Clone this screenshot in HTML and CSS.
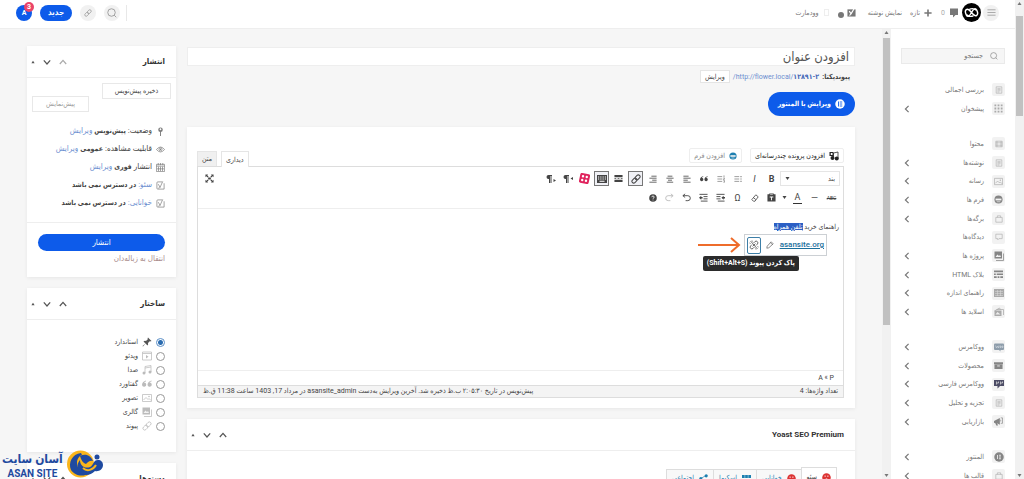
FILE: index.html
```html
<!DOCTYPE html>
<html lang="fa" dir="rtl">
<head>
<meta charset="utf-8">
<title>افزودن نوشته</title>
<link rel="stylesheet" href="styles.css">
</head>
<body>
<svg class="sprite" aria-hidden="true">
  <symbol id="chev-left" viewBox="0 0 10 10"><path d="M7 1 3 5l4 4" class="line"/></symbol>
  <symbol id="chev-up" viewBox="0 0 10 10"><path d="M1 7.500 5 3l4 4.500" class="line"/></symbol>
  <symbol id="chev-down" viewBox="0 0 10 10"><path d="M1 3l4 4.500L9 3" class="line"/></symbol>
  <symbol id="tri-up" viewBox="0 0 10 10"><path d="M5 2l4 6H1z"/></symbol>
  <symbol id="tri-down" viewBox="0 0 10 10"><path d="M1 2h8L5 8z"/></symbol>
  <symbol id="search" viewBox="0 0 20 20"><circle cx="9" cy="9" r="7.500" class="line"/><path d="M14.500 14.500 18.500 18.500" class="line"/></symbol>
  <symbol id="link" viewBox="0 0 20 20"><g transform="rotate(-45 10 10)" class="line"><rect x="0" y="6.500" width="11" height="7" rx="3.500"/><rect x="9" y="6.500" width="11" height="7" rx="3.500"/></g></symbol>
  <symbol id="unlink" viewBox="0 0 20 20"><g transform="rotate(-45 10 10)" class="line"><path d="M8 6.500H4a3.500 3.500 0 0 0 0 7h4M12 6.500h4a3.500 3.500 0 0 1 0 7h-4M6 10h8"/></g><path d="M3 2l14 16M3 7 1 6M7 3 6 1M17 13l2 1M13 17l1 2" class="line"/></symbol>
  <symbol id="menu" viewBox="0 0 20 20"><path d="M1 4h18M1 10h18M1 16h18" class="line"/></symbol>
  <symbol id="comment" viewBox="0 0 20 20"><path d="M2 1h16v13h-5l-5 5v-5H2z"/></symbol>
  <symbol id="bubble" viewBox="0 0 20 20"><path d="M2 3h16v11h-8l-3 3v-3H2z" class="line"/></symbol>
  <symbol id="plus" viewBox="0 0 20 20"><path d="M8 1h4v7h7v4h-7v7H8v-7H1V8h7z"/></symbol>
  <symbol id="yoast" viewBox="0 0 20 20"><path d="M14 2H4Q2 2 2 4v12q0 2 2 2h14V5M5 7l4 7M15 1 9 14q-1 2-4 2" class="line"/></symbol>
  <symbol id="yoast-fill" viewBox="0 0 20 20"><path d="M1 3h18v16H1z"/><path d="M5 7l4 6M16 1 9 13q-1 3-4 3" fill="none" stroke="#fff" stroke-width="2.500"/></symbol>
  <symbol id="page" viewBox="0 0 20 20"><path d="M3 2h14v16H3zM6 6h8M6 9h8M6 12h8M6 15h5" class="line"/></symbol>
  <symbol id="dots" viewBox="0 0 20 20"><path d="M1 1h4v4H1zM8 1h4v4H8zM15 1h4v4h-4zM1 8h4v4H1zM8 8h4v4H8zM15 8h4v4h-4zM1 15h4v4H1zM8 15h4v4H8zM15 15h4v4h-4z"/></symbol>
  <symbol id="grid" viewBox="0 0 20 20"><path d="M0 2h6v7H0zM7 2h6v7H7zM14 2h6v7h-6zM0 11h6v7H0zM7 11h6v7H7zM14 11h6v7h-6z"/></symbol>
  <symbol id="stack" viewBox="0 0 20 20"><path d="M2 3h16v14H2zM2 7h16M2 13h16M5 3v14M15 3v14" class="line"/></symbol>
  <symbol id="image" viewBox="0 0 20 20"><path d="M1 3h18v14H1zM3 14l5-5 4 4 2-2 4 4" class="line"/><circle cx="14" cy="7" r="1.500"/></symbol>
  <symbol id="robot" viewBox="0 0 20 20"><circle cx="10" cy="10" r="9"/><rect x="3.500" y="8" width="13" height="4" fill="#f2f2f2"/><path d="M6 15h8" stroke="#f2f2f2" stroke-width="1.500"/></symbol>
  <symbol id="bag" viewBox="0 0 20 20"><path d="M2 6h16v12H2zM6 6V2h8v4" class="line"/></symbol>
  <symbol id="gallery" viewBox="0 0 20 20"><path d="M1 1h15v14H1z"/><path d="M4 19h15V5" class="line"/><path d="M3 12l4-5 3 3 2-2 2 4z" fill="#f2f2f2"/></symbol>
  <symbol id="blocks" viewBox="0 0 20 20"><path d="M0 1h20v4H0zM0 8h4v3H0zM6 8h14v3H6zM0 14h6v4H0zM8 14h4v4H8zM14 14h6v4h-6z"/></symbol>
  <symbol id="table" viewBox="0 0 20 20"><path d="M0 2h20v16H0z"/><path d="M2 7h16M2 11h16M2 15h16M7 4v12M13 4v12" stroke="#ddd" fill="none"/></symbol>
  <symbol id="slides" viewBox="0 0 20 20"><path d="M1 8 11 2l2 3M5 5h14v11" class="line"/><path d="M1 7h14v11H1z"/><path d="M3 15l4-5 6 5z" fill="#eee"/></symbol>
  <symbol id="woo" viewBox="0 0 20 20"><rect x="0" y="3" width="20" height="13" rx="2"/><path d="M3 7l2 5 2-4 2 4 1-5M12 8h2v3h-2zM16 8h2v3h-2z" stroke="#dfe5ea" fill="none"/><path d="M9 15l4 4v-4z"/></symbol>
  <symbol id="archive" viewBox="0 0 20 20"><path d="M0 3h20v4H0zM1 8h18v10H1z"/><path d="M7 10h6v2H7z" fill="#eee"/></symbol>
  <symbol id="woofa" viewBox="0 0 20 20"><path d="M0 2h20v12h-8l-5 5v-5H0z"/><path d="M5 5v6M9 5v3h-3M13 5v6M17 5v3h-3" stroke="#ddd" stroke-width="1.500" fill="none"/></symbol>
  <symbol id="horn" viewBox="0 0 20 20"><path d="M0 9 13 2v15L7 14l2 5H5l-2-5-3-1z"/><path d="M15 2h4v12h-4M15 6v4" class="line"/></symbol>
  <symbol id="elementor" viewBox="0 0 20 20"><circle cx="10" cy="10" r="9.500"/><path d="M7 6v8M10 6.500h4M10 10h4M10 13.500h4" stroke="#fff" stroke-width="1.500"/></symbol>
  <symbol id="elementor-light" viewBox="0 0 20 20"><circle cx="10" cy="10" r="9.500"/><path d="M7 5v10M9.500 6h5M9.500 10h5M9.500 14h5" stroke="#0d5bea" stroke-width="1.800"/></symbol>
  <symbol id="pin" viewBox="0 0 20 20"><circle cx="10" cy="6" r="5"/><path d="M9 10h2v10H9z"/><circle cx="10" cy="5" r="2" fill="#fff"/></symbol>
  <symbol id="pushpin" viewBox="0 0 20 20"><path d="M12 1 19 8l-2 1-1-1-4 4q1 3-1 5l-4-4-5 6-1-1 6-5-4-4q2-2 5-1l4-4-1-1z"/></symbol>
  <symbol id="eye" viewBox="0 0 20 20"><path d="M1 10q9-11 18 0-9 11-18 0z" class="line"/><circle cx="10" cy="9.500" r="3.500" class="line"/><circle cx="10" cy="9.500" r="1.500"/></symbol>
  <symbol id="calendar" viewBox="0 0 20 20"><path d="M1 3h18v16H1zM1 7h18M5 0v5M10 0v5M15 0v5M5.500 8v10M10 8v10M14.500 8v10M2 13h16" class="line"/></symbol>
  <symbol id="video" viewBox="0 0 20 20"><path d="M1 2h18v16H1zM1 5h18" class="line"/><path d="M8 8l5 3.500L8 15z"/></symbol>
  <symbol id="music" viewBox="0 0 20 20"><path d="M6 16V3l12-2v13M6 6l12-2" class="line"/><circle cx="4" cy="16" r="3"/><circle cx="16" cy="14" r="3"/></symbol>
  <symbol id="quote" viewBox="0 0 20 20"><path d="M8 3Q0 5 0 12a4.300 4.300 0 1 0 4-5q1-2 4-2zM19 3q-8 2-8 9a4.300 4.300 0 1 0 4-5q1-2 4-2z"/></symbol>
  <symbol id="ul" viewBox="0 0 20 20"><path d="M1 4h12M1 10h12M1 16h12" class="line"/><path d="M16 2.500h3v3h-3zM16 8.500h3v3h-3zM16 14.500h3v3h-3z"/></symbol>
  <symbol id="ol" viewBox="0 0 20 20"><path d="M1 4h12M1 10h12M1 16h12M17.500 1v5M16 8h3l-3 3.500h3M16 14h3v4h-3" class="line"/></symbol>
  <symbol id="al-left" viewBox="0 0 20 20"><path d="M1 3h13M1 8h18M1 13h11M1 18h18" class="line"/></symbol>
  <symbol id="al-center" viewBox="0 0 20 20"><path d="M4 3h12M1 8h18M5 13h10M2 18h16" class="line"/></symbol>
  <symbol id="al-right" viewBox="0 0 20 20"><path d="M6 3h13M1 8h18M8 13h11M1 18h18" class="line"/></symbol>
  <symbol id="more" viewBox="0 0 20 20"><path d="M1 2h18v5H1zM1 13h18v5H1zM1 9.200h4v1.800H1zM8 9.200h4v1.800H8zM15 9.200h4v1.800h-4z"/></symbol>
  <symbol id="keyboard" viewBox="0 0 20 20"><path d="M0 2h20v16H0z"/><path d="M2 6h16M2 10h16" stroke="#fff" stroke-width="2" stroke-dasharray="2 1.500"/><path d="M5 14.500h10" stroke="#fff" stroke-width="2"/></symbol>
  <symbol id="pink" viewBox="0 0 20 20"><g transform="rotate(12 10 10)"><rect x="1" y="1" width="18" height="18" rx="3"/><g fill="#fff"><circle cx="6.500" cy="6.500" r="2.200"/><circle cx="13.500" cy="6.500" r="2.200"/><circle cx="6.500" cy="13.500" r="2.200"/><circle cx="13.500" cy="13.500" r="2.200"/></g></g></symbol>
  <symbol id="para-r" viewBox="0 0 20 20"><path d="M12 2H5a4 4 0 0 0 0 8h1v8h2V4h1v14h2V4h1zM20 6v6l-5-3z"/></symbol>
  <symbol id="para-l" viewBox="0 0 20 20"><path d="M12 2H5a4 4 0 0 0 0 8h1v8h2V4h1v14h2V4h1zM15 10v6l5-3z"/></symbol>
  <symbol id="full" viewBox="0 0 20 20"><path d="M1 1h6L5 3l3 3-2 2-3-3-2 2zM19 1v6l-2-2-3 3-2-2 3-3-2-2zM1 19v-6l2 2 3-3 2 2-3 3 2 2zM19 19h-6l2-2-3-3 2-2 3 3 2-2zM7 8h6v4H7z"/></symbol>
  <symbol id="paste" viewBox="0 0 20 20"><path d="M1 3h4V1h10v2h4v16H1z"/><path d="M6 8h8v2h-3v6H9v-6H6zM7 3h6v1H7z" fill="#fff"/></symbol>
  <symbol id="eraser" viewBox="0 0 20 20"><path d="M12 2l6 5-8 11H6l-4-4zM6 9l6 5" class="line"/></symbol>
  <symbol id="outdent" viewBox="0 0 20 20"><path d="M1 3h18M1 8h9M1 13h9M4 18h15" class="line"/><path d="M12 10.500 17 6v3h3v3h-3v3z"/></symbol>
  <symbol id="indent" viewBox="0 0 20 20"><path d="M1 3h18M10 8h9M10 13h9M4 18h15" class="line"/><path d="M0 10.500 5 6v3h3v3H5v3z"/></symbol>
  <symbol id="undo" viewBox="0 0 20 20"><path d="M7 2 2 6l5 4M2 6h11a5 5 0 0 1 0 11H8" class="line"/></symbol>
  <symbol id="redo" viewBox="0 0 20 20"><path d="M13 2l5 4-5 4M18 6H7a5 5 0 0 0 0 11h5" class="line"/></symbol>
  <symbol id="help" viewBox="0 0 20 20"><circle cx="10" cy="10" r="9.500"/><path d="M7 8q0-3 3-3t3 3q0 1.500-3 3v1M10 14v2" stroke="#fff" stroke-width="2" fill="none"/></symbol>
  <symbol id="pencil" viewBox="0 0 20 20"><path d="M13 2l5 5L7 17l-5 1 1-5zM11 4l5 5" class="line"/></symbol>
  <symbol id="media" viewBox="0 0 20 20"><path d="M1 2h8v8H1zM3.500 4v4H7V4z" fill-rule="evenodd"/><path d="M9 12V4l9-2v12" class="line"/><circle cx="7" cy="14" r="4"/><circle cx="15.500" cy="15" r="4"/></symbol>
  <symbol id="sad" viewBox="0 0 20 20"><circle cx="10" cy="10" r="9.500"/><path d="M5.500 7h3M11.500 7h3M6 15q4-4 8 0" stroke="#fff" stroke-width="2" fill="none"/></symbol>
  <symbol id="share" viewBox="0 0 20 20"><path d="M16 3 4 10l12 7" class="line"/><circle cx="16" cy="4" r="3.500"/><circle cx="4" cy="10" r="3.500"/><circle cx="16" cy="16" r="3.500"/></symbol>
</svg>

<div class="scrollbar outer"><svg class="i5"><use href="#tri-up"/></svg><div class="thumb"></div><svg class="i5 end"><use href="#tri-down"/></svg></div>
<div class="app">
  <header class="topbar">
    <div class="top-group">
      <button class="round menu" aria-label="منو"><svg class="i9"><use href="#menu"/></svg></button>
      <a class="site-logo" href="#" aria-label="سایت"><svg viewBox="0 0 20 20"><path d="M10 10Q6.500 5.500 4.500 7t0 5.500T10 10t5.500-2.500 0 5.500-5.500-3M8 6.500q4-1.500 7 1M12 13.500q-4 1.500-7-1" class="line"/></svg></a>
      <a class="top-link count" href="#"><svg class="i10"><use href="#comment"/></svg><span>0</span></a>
      <a class="top-link new" href="#"><svg class="i8"><use href="#plus"/></svg>تازه</a>
      <a class="top-link view" href="#">نمایش نوشته</a>
      <a class="top-link seo" href="#" aria-label="سئو"><svg class="i9"><use href="#yoast-fill"/></svg><i class="dot"></i></a>
      <a class="top-link theme" href="#"><i class="square"></i>وودمارت</a>
    </div>
    <div class="top-group">
      <i class="divider"></i>
      <button class="round" aria-label="جستجو"><svg class="i10"><use href="#search"/></svg></button>
      <button class="round" aria-label="پیوند"><svg class="i8"><use href="#link"/></svg></button>
      <button class="pill">جدید</button>
      <button class="avatar">A<span class="badge">3</span></button>
    </div>
  </header>

  <div class="body">
    <nav class="sidebar">
      <label class="search"><svg class="i8"><use href="#search"/></svg><input type="search" placeholder="جستجو" aria-label="جستجو"></label>
      <ul>
        <li><a href="#"><span class="tile"><svg class="i8"><use href="#page"/></svg></span>بررسی اجمالی</a></li>
        <li><a href="#"><span class="tile"><svg class="i9"><use href="#dots"/></svg></span>پیشخوان</a><svg class="i8"><use href="#chev-left"/></svg></li>
      </ul>
      <ul>
        <li><a href="#"><span class="tile"><svg class="i8"><use href="#stack"/></svg></span>محتوا</a></li>
        <li><a href="#"><span class="tile"><svg class="i8"><use href="#page"/></svg></span>نوشته‌ها</a><svg class="i8"><use href="#chev-left"/></svg></li>
        <li><a href="#"><span class="tile"><svg class="i9"><use href="#image"/></svg></span>رسانه</a><svg class="i8"><use href="#chev-left"/></svg></li>
        <li><a href="#"><span class="tile dark"><svg class="i9"><use href="#robot"/></svg></span>فرم ها</a><svg class="i8"><use href="#chev-left"/></svg></li>
        <li><a href="#"><span class="tile"><svg class="i8"><use href="#bag"/></svg></span>برگه‌ها</a><svg class="i8"><use href="#chev-left"/></svg></li>
        <li><a href="#"><span class="tile"><svg class="i8"><use href="#bubble"/></svg></span>دیدگاه‌ها</a></li>
        <li><a href="#"><span class="tile dark"><svg class="i10"><use href="#gallery"/></svg></span>پروژه ها</a><svg class="i8"><use href="#chev-left"/></svg></li>
        <li><a href="#"><span class="tile dark"><svg class="i9"><use href="#blocks"/></svg></span>بلاک HTML</a><svg class="i8"><use href="#chev-left"/></svg></li>
        <li><a href="#"><span class="tile"><svg class="i10"><use href="#table"/></svg></span>راهنمای اندازه</a><svg class="i8"><use href="#chev-left"/></svg></li>
        <li><a href="#"><span class="tile"><svg class="i10"><use href="#slides"/></svg></span>اسلاید ها</a><svg class="i8"><use href="#chev-left"/></svg></li>
      </ul>
      <ul>
        <li><a href="#"><span class="tile blue"><svg class="i10"><use href="#woo"/></svg></span>ووکامرس</a><svg class="i8"><use href="#chev-left"/></svg></li>
        <li><a href="#"><span class="tile dark"><svg class="i9"><use href="#archive"/></svg></span>محصولات</a><svg class="i8"><use href="#chev-left"/></svg></li>
        <li><a href="#"><span class="tile ink"><svg class="i10"><use href="#woofa"/></svg></span>ووکامرس فارسی</a><svg class="i8"><use href="#chev-left"/></svg></li>
        <li><a href="#"><span class="tile"><svg class="i8"><use href="#page"/></svg></span>تجزیه و تحلیل</a><svg class="i8"><use href="#chev-left"/></svg></li>
        <li><a href="#"><span class="tile dark"><svg class="i9"><use href="#horn"/></svg></span>بازاریابی</a><svg class="i8"><use href="#chev-left"/></svg></li>
      </ul>
      <ul>
        <li><a href="#"><span class="tile dark"><svg class="i10"><use href="#elementor"/></svg></span>المنتور</a><svg class="i8"><use href="#chev-left"/></svg></li>
        <li><a href="#"><span class="tile"><svg class="i8"><use href="#bag"/></svg></span>قالب ها</a><svg class="i8"><use href="#chev-left"/></svg></li>
      </ul>
    </nav>
    <div class="scrollbar inner"><svg class="i5"><use href="#tri-up"/></svg><div class="thumb"></div><svg class="i5 end"><use href="#tri-down"/></svg></div>

    <main>
      <section class="content">
        <input class="title" type="text" placeholder="افزودن عنوان" aria-label="افزودن عنوان">
        <div class="permalink"><strong>پیوندیکتا:</strong><a href="#" dir="ltr">/http://flower.local/<b>۱۲۸۹۱-۲</b></a><button class="tiny">ویرایش</button></div>
        <button class="elementor"><svg class="i10"><use href="#elementor-light"/></svg>ویرایش با المنتور</button>

        <div class="card editor-card">
          <div class="media-row">
            <button class="media-btn"><svg class="i10"><use href="#media"/></svg>افزودن پرونده چندرسانه‌ای</button>
            <button class="media-btn soft"><svg class="i8"><use href="#robot"/></svg>افزودن فرم</button>
            <div class="tabs"><button class="on">دیداری</button><button>متن</button></div>
          </div>
          <div class="editor">
            <div class="toolbar">
              <div class="tools">
                <button class="format">بند<svg class="i5"><use href="#tri-down"/></svg></button>
                <button><b>B</b></button>
                <button><em>I</em></button>
                <button class="light" aria-label="فهرست"><svg class="i8"><use href="#ul"/></svg></button>
                <button class="light" aria-label="فهرست شماره‌دار"><svg class="i8"><use href="#ol"/></svg></button>
                <button aria-label="نقل قول"><svg class="i8"><use href="#quote"/></svg></button>
                <button aria-label="چپ‌چین"><svg class="i8"><use href="#al-left"/></svg></button>
                <button aria-label="وسط‌چین"><svg class="i8"><use href="#al-center"/></svg></button>
                <button aria-label="راست‌چین"><svg class="i8"><use href="#al-right"/></svg></button>
                <button class="active" aria-label="پیوند"><svg class="i10"><use href="#link"/></svg></button>
                <button aria-label="ادامه"><svg class="i9"><use href="#more"/></svg></button>
                <button class="active" aria-label="نوار ابزار"><svg class="i10"><use href="#keyboard"/></svg></button>
                <button class="pink" aria-label="افزونه"><svg class="i11"><use href="#pink"/></svg></button>
                <button aria-label="راست به چپ"><svg class="i10"><use href="#para-r"/></svg></button>
                <button aria-label="چپ به راست"><svg class="i10"><use href="#para-l"/></svg></button>
                <button class="fullscreen" aria-label="تمام صفحه"><svg class="i9"><use href="#full"/></svg></button>
              </div>
              <div class="tools">
                <button class="abc"><s>ABC</s></button>
                <button>—</button>
                <button><u>A</u></button>
                <button class="caret" aria-label="رنگ"><svg class="i5"><use href="#tri-down"/></svg></button>
                <button aria-label="چسباندن"><svg class="i9"><use href="#paste"/></svg></button>
                <button aria-label="پاک کردن"><svg class="i8"><use href="#eraser"/></svg></button>
                <button>Ω</button>
                <button aria-label="کاهش تورفتگی"><svg class="i9"><use href="#outdent"/></svg></button>
                <button aria-label="افزایش تورفتگی"><svg class="i9"><use href="#indent"/></svg></button>
                <button aria-label="واگرد"><svg class="i9"><use href="#undo"/></svg></button>
                <button class="off" aria-label="ازنو"><svg class="i9"><use href="#redo"/></svg></button>
                <button aria-label="راهنما"><svg class="i8"><use href="#help"/></svg></button>
              </div>
            </div>
            <div class="canvas">
              <p>راهنمای خرید <span class="selected">تلفن همراه</span></p>
              <div class="link-pop">
                <a href="#">asansite.org</a>
                <button aria-label="ویرایش پیوند"><svg class="i8"><use href="#pencil"/></svg></button>
                <button class="focus" aria-label="پاک کردن پیوند"><svg class="i10"><use href="#unlink"/></svg></button>
                <div class="tooltip">پاک کردن پیوند (Shift+Alt+S)</div>
                <svg class="arrow" viewBox="0 0 44 16"><path d="M1 8h41M34 1l8 7-8 7"/></svg>
              </div>
            </div>
            <div class="path" dir="ltr">A « P</div>
            <div class="status"><span>تعداد واژه‌ها: 4</span><span>پیش‌نویس در تاریخ ۲:۰۵:۳۰ ب.ظ ذخیره شد. آخرین ویرایش به‌دست asansite_admin در مرداد 17, 1403 ساعت 11:38 ق.ظ</span></div>
          </div>
        </div>

        <div class="card">
          <div class="card-head"><h2>Yoast SEO Premium</h2><span class="handles"><svg class="i8"><use href="#chev-up"/></svg><svg class="i8"><use href="#chev-down"/></svg><svg class="i4"><use href="#tri-up"/></svg></span></div>
          <div class="seo-tabs">
            <button class="on"><svg class="i9 red"><use href="#sad"/></svg>سئو</button>
            <button><svg class="i9 red"><use href="#sad"/></svg>خوانایی</button>
            <button><svg class="i9"><use href="#grid"/></svg>اسکیما</button>
            <button><svg class="i9"><use href="#share"/></svg>اجتماعی</button>
          </div>
        </div>
      </section>

      <aside>
        <div class="card">
          <div class="card-head"><h2>انتشار</h2><span class="handles"><svg class="i8 faint"><use href="#chev-up"/></svg><svg class="i8"><use href="#chev-down"/></svg><svg class="i4"><use href="#tri-up"/></svg></span></div>
          <div class="drafts"><button>ذخیره پیش‌نویس</button><button class="preview">پیش‌نمایش</button></div>
          <ul class="facts">
            <li><svg class="i9"><use href="#pin"/></svg><span>وضعیت: <b>پیش‌نویس</b> <a href="#">ویرایش</a></span></li>
            <li><svg class="i9"><use href="#eye"/></svg><span>قابلیت مشاهده: <b>عمومی</b> <a href="#">ویرایش</a></span></li>
            <li><svg class="i9"><use href="#calendar"/></svg><span>انتشار <b>فوری</b> <a href="#">ویرایش</a></span></li>
            <li><svg class="i9"><use href="#yoast"/></svg><span><a href="#">سئو:</a> <b>در دسترس نمی باشد</b></span></li>
            <li><svg class="i9"><use href="#yoast"/></svg><span><a href="#">خوانایی:</a> <b>در دسترس نمی باشد</b></span></li>
          </ul>
          <div class="publish"><button class="primary">انتشار</button><a href="#">انتقال به زباله‌دان</a></div>
        </div>

        <div class="card">
          <div class="card-head"><h2>ساختار</h2><span class="handles"><svg class="i8"><use href="#chev-up"/></svg><svg class="i8"><use href="#chev-down"/></svg><svg class="i4"><use href="#tri-up"/></svg></span></div>
          <div class="formats">
            <label><input type="radio" name="format" checked><svg class="i10 strong"><use href="#pushpin"/></svg>استاندارد</label>
            <label><input type="radio" name="format"><svg class="i10"><use href="#video"/></svg>ویدئو</label>
            <label><input type="radio" name="format"><svg class="i10"><use href="#music"/></svg>صدا</label>
            <label><input type="radio" name="format"><svg class="i10"><use href="#quote"/></svg>گفتاورد</label>
            <label><input type="radio" name="format"><svg class="i10"><use href="#image"/></svg>تصویر</label>
            <label><input type="radio" name="format"><svg class="i10"><use href="#gallery"/></svg>گالری</label>
            <label><input type="radio" name="format"><svg class="i10"><use href="#link"/></svg>پیوند</label>
          </div>
        </div>

        <div class="card">
          <div class="card-head"><h2>دسته‌ها</h2><span class="handles"><svg class="i8"><use href="#chev-up"/></svg><svg class="i8"><use href="#chev-down"/></svg><svg class="i4"><use href="#tri-up"/></svg></span></div>
        </div>
      </aside>
    </main>
  </div>
</div>

<div class="brand">
  <svg viewBox="0 0 38 29"><circle cx="14.500" cy="14" r="13.500" fill="#f9b51b"/><path d="M15 3C6 4 2 13 5 20c4 6 13 8 19 2-6 2-13-2-13-9 0-4 2-7 5-8z" fill="#1f4aa0"/><path d="M14 10c0 6 5 9 10 7 4-2 3-7 8-7 3 0 5 2 5 5 0 4-4 7-8 6-4 4-9 5-13 3-5-3-6-10-2-14z" fill="#1f4aa0"/><path d="M14 6c6-3 11 0 13 5-3-1-5 1-7 3-3-1-5-4-6-8z" fill="#1f4aa0"/><path d="M17 18c4 4 10 2 13-3" fill="none" stroke="#f9b51b" stroke-width="2"/><circle cx="31" cy="7" r="2.500" fill="#1f4aa0"/></svg>
  <div><strong>آسان سایت</strong><span>ASAN SITE</span></div>
</div>
</body>
</html>
```

FILE: styles.css
```css
* { box-sizing: border-box; }
html, body { height: 100%; }
body {
  margin: 0;
  display: flex;
  overflow: hidden;
  position: relative;
  background: #f6f6f6;
  color: #444;
  font: 8px/12px Roboto, "DejaVu Sans Condensed", "DejaVu Sans", sans-serif;
}
button, input { font: inherit; color: inherit; margin: 0; }
button { padding: 0; border: 0; background: none; display: flex; align-items: center; justify-content: center; cursor: pointer; white-space: nowrap; }
a { color: inherit; text-decoration: none; }
b, strong { font-size: 7px; }
ul { list-style: none; margin: 0; padding: 0; }
h2, p { margin: 0; }
svg { fill: currentColor; flex: none; display: block; }
.line { fill: none; stroke: currentColor; stroke-width: var(--stroke, 1.5); }
.sprite { position: absolute; width: 0; height: 0; }
.i4 { width: 4px; height: 4px; }
.i5 { width: 5px; height: 5px; }
.i8 { width: 8px; height: 8px; }
.i9 { width: 9px; height: 9px; }
.i10 { width: 10px; height: 10px; }
.i11 { width: 11px; height: 11px; }

/* scrollbars */
.scrollbar { flex: none; width: 9px; background: #f1f1f1; display: flex; flex-direction: column; align-items: center; color: #777; padding-top: 1px; }
.scrollbar .thumb { width: 7px; background: #c1c1c1; }
.scrollbar .end { margin-top: auto; margin-bottom: 1px; }
.outer .thumb { height: 21%; margin-top: 10px; }
.inner .thumb { height: 64%; margin-top: 3px; }

/* top bar */
.app { flex: 1; min-width: 0; display: flex; flex-direction: column; }
.topbar { flex: none; height: 29px; padding: 0 16px; background: #fff; border-bottom: 1px solid #eee; display: flex; align-items: center; justify-content: space-between; color: #777; font-size: 7px; }
.top-group { display: flex; align-items: center; padding-bottom: 3px; }
.top-link { display: flex; align-items: center; }
.round { width: 16px; height: 16px; border-radius: 50%; background: #f1f1f1; color: #888; }
.site-logo { width: 19px; height: 19px; border-radius: 50%; background: #000; color: #fff; margin-right: 2px; }
.site-logo svg { width: 19px; height: 19px; }
.count { margin-right: 3px; gap: 4px; color: #777; }
.count span { color: #aaa; }
.new { margin-right: 9px; gap: 4px; }
.view { margin-right: 8px; }
.seo { margin-right: 12px; gap: 3px; }
.dot { width: 6px; height: 6px; border-radius: 50%; background: #777; margin-top: 4px; }
.theme { margin-right: 9px; gap: 5px; }
.square { width: 5px; height: 7px; border: 1px solid #eee; }
.divider { width: 1px; height: 16px; background: #e8e8e8; margin-left: 6px; }
.top-group .round + .round { margin-right: 8px; }
.pill { width: 32px; height: 16px; border-radius: 8px; background: #0d5bea; color: #fff; font-weight: bold; font-size: 8px; margin-right: 8px; }
.avatar { position: relative; width: 16px; height: 16px; border-radius: 50%; background: #0d5bea; color: #fff; font-weight: bold; margin-right: 8px; }
.badge { position: absolute; top: -3px; right: -2px; width: 10px; height: 10px; border-radius: 50%; background: #ea4569; line-height: 10px; }

.body { flex: 1; min-height: 0; display: flex; }

/* sidebar */
.sidebar { flex: none; width: 124px; padding: 19px 10px 0; background: #fff; color: #777; font-size: 7px; overflow: hidden; }
.search { display: flex; align-items: center; gap: 7px; height: 16px; padding: 0 6px; border: 1px solid #eaeaea; background: #f6f6f6; }
.search input { flex: 1; min-width: 0; border: 0; padding: 0; background: none; outline: 0; }
input::placeholder { color: inherit; opacity: 1; }
.sidebar ul { margin-top: 16px; }
.sidebar li { height: 19px; display: flex; align-items: center; justify-content: space-between; padding-left: 2px; }
.sidebar li:nth-child(3n) { height: 18px; }
.sidebar li a { display: flex; align-items: center; gap: 8px; }
.tile { width: 13px; height: 13px; background: #f2f2f2; border-radius: 2px; display: flex; align-items: center; justify-content: center; color: #aaa; }
.tile.dark { color: #858585; }
.tile.blue { color: #8e9dab; }
.tile.ink { color: #4d4d66; }

/* main columns */
main { flex: 1; min-width: 0; display: flex; gap: 11px; padding: 17px 27px 0; overflow: hidden; }
.content { flex: 1; min-width: 0; }
aside { flex: none; width: 149px; }
.card { background: #fff; margin-bottom: 11px; box-shadow: 0 1px 4px #0001; }
.card-head { height: 32px; padding: 0 11px 0 4px; display: flex; align-items: center; justify-content: space-between; border-bottom: 1px solid #eee; }
.card-head h2 { font-size: 8px; color: #333; }
.handles { display: flex; align-items: center; gap: 8px; color: #555; }
.faint { color: #aaa; }

.title { display: block; width: 100%; height: 19px; margin-top: 1px; padding: 0 5px; border: 1px solid #eee; background: #fff; font-size: 13px; color: #555; }
.permalink { display: flex; align-items: center; gap: 3px; padding-right: 5px; margin-top: 4px; height: 13px; font-size: 7px; }
.permalink a, .facts a { color: #6d8fd0; }
.permalink b { color: #4468b8; }
.tiny { height: 13px; padding: 0 4px; border: 1px solid #e5e5e5; background: #fff; }
.elementor { height: 24px; padding: 0 10px; gap: 4px; border-radius: 12px; background: #0d5bea; color: #fff; font-weight: bold; font-size: 7px; margin: 9px 0 11px; }

/* editor */
.editor-card { padding: 21px 11px 10px 10px; }
.media-row { display: flex; align-items: flex-start; gap: 8px; height: 18px; font-size: 7px; }
.media-btn { height: 15px; padding: 0 4px; gap: 4px; border: 1px solid #eee; border-radius: 2px; color: #222; }
.media-btn.soft { color: #888; }
.media-btn.soft svg { color: #1d7fb0; }
.tabs { margin-right: auto; align-self: flex-end; display: flex; gap: 4px; }
.tabs button { height: 15px; padding: 0 4px; border: 1px solid #e5e5e5; border-bottom: 0; background: #f0f0f0; }
.tabs .on { background: #fff; height: 16px; margin-bottom: -1px; }
.editor { border: 1px solid #ddd; }
.toolbar { padding: 4px 3px 3px; border-bottom: 1px solid #eee; display: flex; flex-direction: column; gap: 4px; }
.tools { display: flex; align-items: center; height: 15px; color: #444; --stroke: 2; }
.tools button { width: 17px; height: 15px; font-size: 9px; }
.tools b { font-size: 9px; }
.tools .format { width: 60px; padding: 0 4px; justify-content: space-between; border: 1px solid #e5e5e5; font-size: 7px; }
.tools .active { border: 1px solid #777; background: #f0f1f6; width: 15px; margin: 0 1px; }
.tools .light { color: #888; }
.tools .off { color: #bbb; }
.tools .pink { color: #e0245e; }
.tools .abc { font-size: 5px; }
.tools .caret { width: 9px; }
.tools u { text-decoration: none; line-height: 11px; border-bottom: 1px solid #333; padding: 0 2px; }
.tools .fullscreen { margin-right: auto; }
.canvas { position: relative; height: 161px; padding: 12px 4px; font-size: 7px; }
.selected { background: #2b5fc4; color: #fff; text-decoration: underline; }
.link-pop { position: absolute; top: 25px; right: 16px; width: 83px; height: 22px; display: flex; align-items: center; gap: 4px; padding: 0 2px; background: #fff; border: 1px solid #ccd0d4; }
.link-pop a { color: #1b6f9c; text-decoration: underline; font-size: 8px; font-weight: 500; }
.link-pop button { width: 12px; height: 17px; }
.link-pop .focus { width: 16px; border: 1px solid #3d7fa8; border-radius: 2px; }
.tooltip { position: absolute; top: 21px; right: 27px; height: 15px; padding: 0 4px; line-height: 15px; border-radius: 2px; background: #2b2b2b; color: #fff; font-weight: bold; font-size: 7px; white-space: nowrap; }
.arrow { position: absolute; top: 2px; right: 85px; width: 44px; height: 16px; fill: none; stroke: #ee6c2b; stroke-width: 2; }
.path { height: 15px; padding: 0 9px; line-height: 15px; text-align: right; border-top: 1px solid #eee; font-size: 7px; }
.status { height: 12px; padding: 0 5px; line-height: 11px; border-top: 1px solid #ddd; background: #f4f4f4; display: flex; justify-content: space-between; font-size: 7px; white-space: nowrap; }

.seo-tabs { display: flex; align-items: flex-end; padding: 16px 18px 0; font-size: 7px; }
.seo-tabs button { height: 18px; padding: 0 5px; gap: 5px; border: 1px solid #ddd; border-right-width: 0; background: #f8f8f8; color: #1b7fb0; }
.seo-tabs .on { height: 20px; border-right-width: 1px; background: #fff; color: #444; }
.seo-tabs .red { color: #dc3232; }

/* publish box */
.drafts { padding: 5px 5px 0; font-size: 7px; }
.drafts button { width: 69px; height: 16px; border: 1px solid #e8e8e8; }
.drafts .preview { width: 57px; margin: -3px auto 0 0; color: #999; }
.facts { padding: 10px 11px; border-bottom: 1px solid #eee; }
.facts li { display: flex; align-items: center; gap: 4px; height: 18px; white-space: nowrap; }
.facts svg { color: #777; }
.publish { padding: 11px 11px 12px; }
.publish a { display: block; margin-top: 2px; color: #a98b8b; }
.primary { width: 100%; height: 17px; border-radius: 9px; background: #0d5bea; color: #fff; }

.formats { padding: 15px 11px 19px; display: flex; flex-direction: column; font-size: 7px; }
.formats label { height: 14px; display: flex; align-items: center; gap: 4px; }
.formats svg { color: #bbb; }
.formats .strong { color: #555; }
.formats input { appearance: none; width: 9px; height: 9px; border: 1px solid #999; border-radius: 50%; background: #fff; }
.formats input:checked { background: radial-gradient(#2b6cb0 2px, #fff 3px); border-color: #5b8fc7; }

/* brand watermark over the page corner */
.brand { position: absolute; left: 2px; bottom: 0; display: flex; align-items: center; gap: 3px; color: #1f4aa0; }
.brand svg { width: 38px; height: 29px; }
.brand div { display: flex; flex-direction: column; align-items: center; }
.brand strong { font-size: 12px; line-height: 17px; }
.brand span { font-size: 10px; line-height: 11px; font-weight: bold; }
```
